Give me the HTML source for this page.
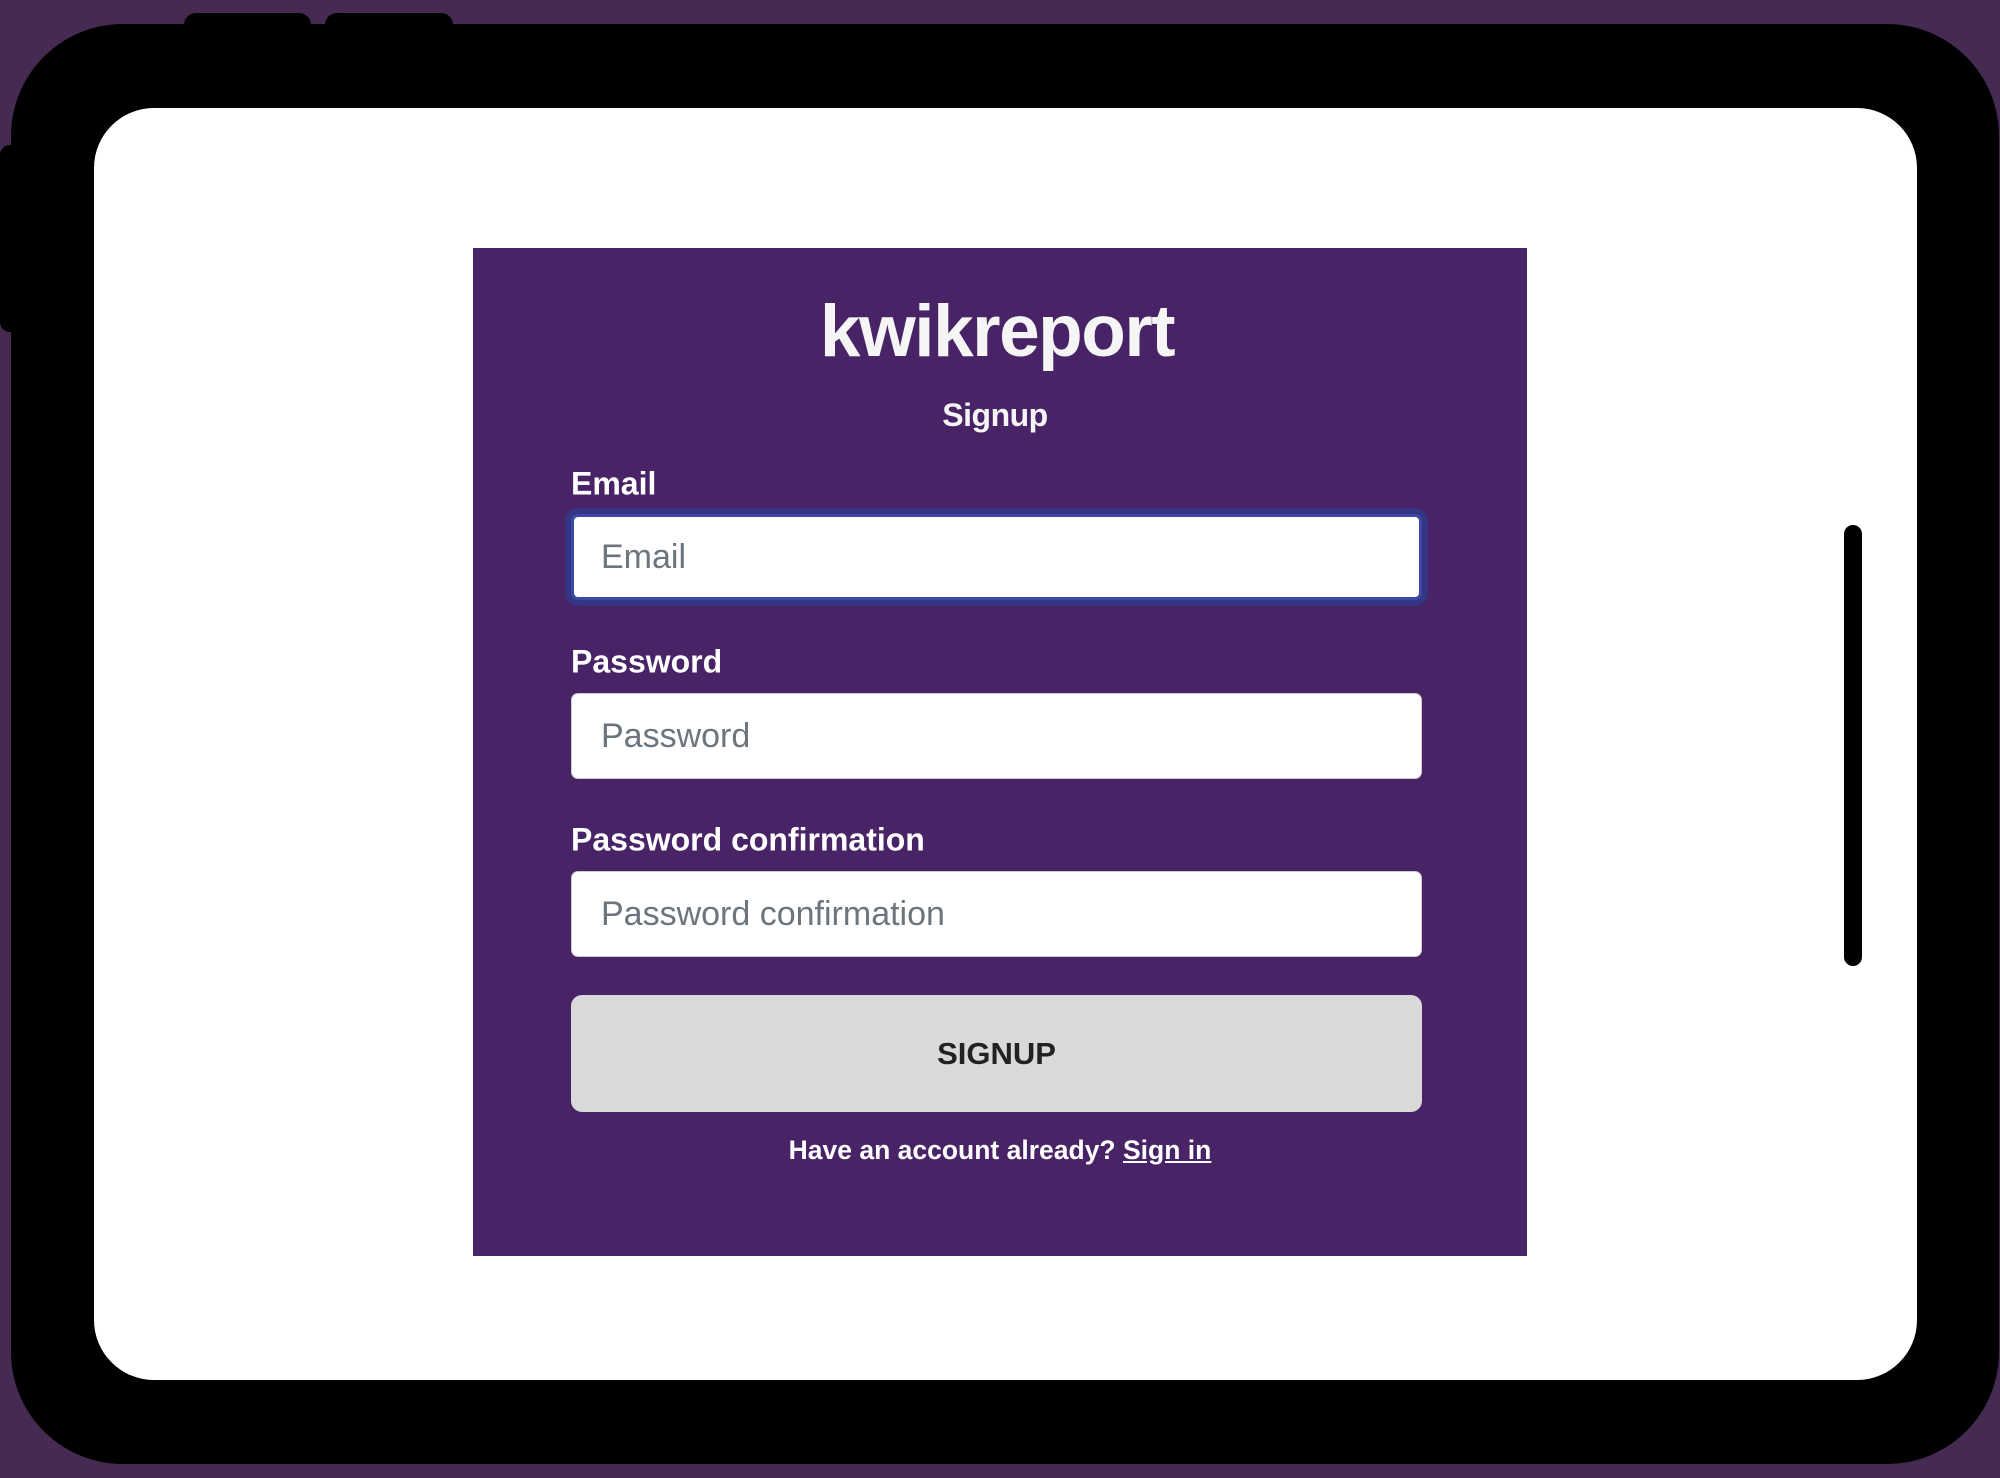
<!DOCTYPE html>
<html><head><style>
*{margin:0;padding:0;box-sizing:border-box}
body{width:2000px;height:1478px;background:#452a52;position:relative;overflow:hidden;font-family:"Liberation Sans",sans-serif}
.abs{position:absolute}
.btn{background:#000;border-radius:12px 12px 0 0}
#dev{left:11px;top:24px;width:1988px;height:1440px;background:#000;border-radius:112px}
#scr{left:94px;top:108px;width:1823px;height:1272px;background:#fff;border-radius:60px}
#card{left:473px;top:248px;width:1054px;height:1008px;background:#482366}
.lbl{position:absolute;left:571px;color:#fff;font-weight:bold;font-size:32px;letter-spacing:0;transform:translateY(-50%)}
.inp{position:absolute;left:571px;width:851px;height:86px;background:#fff;border-radius:7px;border:1px solid #ccc;color:#6c757d;font-size:34px;line-height:84px;padding-left:29px}
</style></head><body>
<div class="abs btn" style="left:184px;top:13px;width:127px;height:14px"></div>
<div class="abs btn" style="left:325px;top:13px;width:128px;height:14px"></div>
<div class="abs" style="left:0;top:145px;width:14px;height:187px;background:#000;border-radius:10px 0 0 10px"></div>
<div id="dev" class="abs"></div>
<div id="scr" class="abs"></div>
<div class="abs" style="left:1844px;top:525px;width:18px;height:441px;background:#000;border-radius:9px"></div>
<div id="card" class="abs"></div>
<div class="abs" style="left:470px;width:1054px;top:290px;text-align:center;color:#f5f5f5;font-weight:bold;font-size:73px;letter-spacing:-1.5px">kwikreport</div>
<div class="abs" style="left:468px;width:1054px;top:397px;text-align:center;color:#f5f5f5;font-weight:bold;font-size:32px;letter-spacing:-0.5px">Signup</div>
<div class="lbl" style="top:484px">Email</div>
<div class="inp" style="top:514px;border:3px solid #3b48a8;box-shadow:0 0 0 6px #363584;line-height:80px;padding-left:27px">Email</div>
<div class="lbl" style="top:662px">Password</div>
<div class="inp" style="top:693px">Password</div>
<div class="lbl" style="top:840px">Password confirmation</div>
<div class="inp" style="top:871px">Password confirmation</div>
<div class="abs" style="left:571px;top:995px;width:851px;height:117px;background:#d9d9d9;border-radius:11px;text-align:center;line-height:117px;font-weight:bold;font-size:31px;color:#222">SIGNUP</div>
<div class="abs" style="left:473px;width:1054px;top:1135px;text-align:center;color:#fff;font-weight:bold;font-size:26.5px">Have an account already? <span style="text-decoration:underline">Sign in</span></div>
</body></html>
